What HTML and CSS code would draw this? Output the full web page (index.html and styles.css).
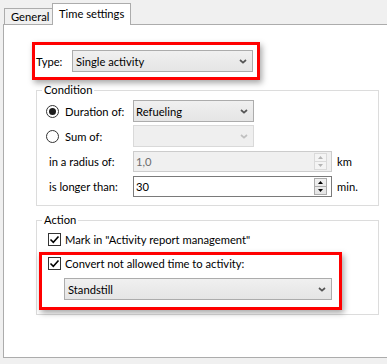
FILE: index.html
```html
<!DOCTYPE html>
<html lang="en">
<head>
  <meta charset="UTF-8">
  <title>Time settings</title>
  <link rel="stylesheet" href="styles.css">
</head>
<body>
  <div class="tabs">
    <div class="tab">General</div>
    <div class="tab active">Time settings</div>
  </div>

  <div class="panel">
    <div class="highlight type-box">
      <span class="type-label">Type:</span>
      <div class="combo type-combo">
        <span>Single activity</span>
        <svg class="chev" width="8" height="5" viewBox="0 0 8 5"><path d="M1 1l3 2.6L7 1"/></svg>
      </div>
    </div>

    <fieldset class="group condition">
      <legend>Condition</legend>
      <div class="cond-grid">
        <label class="opt"><span class="radio checked"></span>Duration of:</label>
        <div class="combo short">
          <span>Refueling</span>
          <svg class="chev" width="8" height="5" viewBox="0 0 8 5"><path d="M1 1l3 2.6L7 1"/></svg>
        </div>
        <span></span>

        <label class="opt"><span class="radio"></span>Sum of:</label>
        <div class="combo short disabled">
          <span></span>
          <svg class="chev" width="8" height="5" viewBox="0 0 8 5"><path d="M1 1l3 2.6L7 1"/></svg>
        </div>
        <span></span>

        <span class="plain">in a radius of:</span>
        <div class="spin disabled">
          <span class="spin-value">1,0</span>
          <div class="spin-buttons">
            <svg width="5" height="3" viewBox="0 0 5 3"><path d="M0 3h5L2.5 0z"/></svg>
            <svg width="5" height="3" viewBox="0 0 5 3"><path d="M0 0h5L2.5 3z"/></svg>
          </div>
        </div>
        <span class="unit">km</span>

        <span class="plain">is longer than:</span>
        <div class="spin">
          <span class="spin-value">30</span>
          <div class="spin-buttons">
            <svg width="5" height="3" viewBox="0 0 5 3"><path d="M0 3h5L2.5 0z"/></svg>
            <svg width="5" height="3" viewBox="0 0 5 3"><path d="M0 0h5L2.5 3z"/></svg>
          </div>
        </div>
        <span class="unit">min.</span>
      </div>
    </fieldset>

    <fieldset class="group action">
      <legend>Action</legend>
      <label class="check-row mark-row">
        <span class="check"><svg width="11" height="11" viewBox="0 0 11 11"><path d="M1.5 5.5l2.8 2.8L9.5 2.5"/></svg></span>
        Mark in "Activity report management"
      </label>
      <div class="highlight convert-box">
        <label class="check-row">
          <span class="check"><svg width="11" height="11" viewBox="0 0 11 11"><path d="M1.5 5.5l2.8 2.8L9.5 2.5"/></svg></span>
          Convert not allowed time to activity:
        </label>
        <div class="combo convert-combo">
          <span>Standstill</span>
          <svg class="chev" width="8" height="5" viewBox="0 0 8 5"><path d="M1 1l3 2.6L7 1"/></svg>
        </div>
      </div>
    </fieldset>
  </div>
</body>
</html>
```

FILE: styles.css
```css
body {
  margin: 0;
  width: 387px;
  height: 364px;
  overflow: hidden;
  background-color: #f0f0f0;
  font-family: "Segoe UI", Lato, "Open Sans", sans-serif;
  font-size: 11.2px;
  color: #000;
}

/* tabs */
.tabs {
  display: flex;
  align-items: flex-end;
  height: 25px;
  padding-left: 4px;
  margin-bottom: -1px;
  position: relative;
  z-index: 1;
  white-space: nowrap;
}

.tab {
  box-sizing: border-box;
  height: 17px;
  padding: 0 0 0 6px;
  width: 49px;
  line-height: 15px;
  border: 1px solid #acacac;
  background-color: #f0f0f0;
}

.tab.active {
  height: 22px;
  width: 79px;
  margin-left: -1px;
  padding-left: 6px;
  line-height: 19px;
  border-bottom: none;
  background-color: #fff;
}

/* panel */
.panel {
  box-sizing: border-box;
  width: 385px;
  height: 334px;
  margin-left: 3px;
  padding: 17px 0 0 28px;
  border: 1px solid #acacac;
  background-color: #fff;
}

.highlight {
  box-sizing: border-box;
  border: 3px solid #f00;
  box-shadow: 2px 3px 6px rgba(0, 0, 0, 0.35);
}

.type-box {
  display: flex;
  align-items: center;
  width: 228px;
  height: 38px;
  padding-left: 1px;
}

.type-label {
  width: 36px;
}

/* combo boxes */
.combo {
  box-sizing: border-box;
  display: flex;
  align-items: center;
  justify-content: space-between;
  height: 22px;
  padding: 0 5px 0 3px;
  border: 1px solid #acacac;
  background: linear-gradient(#f0f0f0, #e5e5e5);
}

.chev {
  fill: none;
  stroke: #555;
  stroke-width: 1.7;
}

.combo.disabled {
  border-color: #d9d9d9;
  background: #efefef;
}

.combo.disabled .chev {
  stroke: #bfbfbf;
}

.type-combo {
  width: 181px;
}

.combo.short {
  width: 121px;
  padding-left: 2px;
}

/* groups */
.group {
  box-sizing: border-box;
  width: 343px;
  margin: 0 0 0 4px;
  padding: 0;
  border: 1px solid #dcdcdc;
  min-width: 0;
}

.group legend {
  margin-left: 5px;
  padding: 0 2px;
  line-height: 16px;
}

.condition {
  margin-top: 2px;
  padding-bottom: 8px;
}

.cond-grid {
  display: grid;
  grid-template-columns: 87px 199px auto;
  grid-auto-rows: 22px;
  row-gap: 3px;
  align-items: center;
  padding: 2px 0 0 9px;
}

.opt {
  display: flex;
  align-items: center;
  gap: 6px;
}

.radio {
  box-sizing: border-box;
  display: flex;
  align-items: center;
  justify-content: center;
  width: 13px;
  height: 13px;
  border: 1px solid #333;
  border-radius: 50%;
  background-color: #fff;
}

.radio.checked::after {
  content: "";
  width: 7px;
  height: 7px;
  border-radius: 50%;
  background-color: #1b1b1b;
}

.plain {
  padding-left: 3px;
}

.unit {
  padding-left: 5px;
}

/* spin inputs */
.spin {
  box-sizing: border-box;
  display: flex;
  align-items: stretch;
  justify-content: space-between;
  height: 21px;
  padding: 1px 4px 1px 2px;
  border: 1px solid #7a7a7a;
  background-color: #fff;
}

.spin-value {
  align-self: center;
}

.spin-buttons {
  display: flex;
  flex-direction: column;
  width: 11px;
  border: 1px solid #acacac;
  background: linear-gradient(#f0f0f0, #e5e5e5);
}

.spin-buttons svg {
  flex: 1;
  width: 5px;
  margin: 0 auto;
  fill: #000;
}

.spin-buttons svg + svg {
  border-top: 1px solid #acacac;
  width: 100%;
  padding: 0 3px;
  box-sizing: border-box;
}

.spin.disabled {
  border-color: #cccccc;
  background-color: #f0f0f0;
  color: #6d6d6d;
}

.spin.disabled .spin-buttons {
  border-color: #dadada;
  background: #f4f4f4;
}

.spin.disabled .spin-buttons svg {
  fill: #b5b5b5;
}

.spin.disabled .spin-buttons svg + svg {
  border-top-color: #dadada;
}

/* action group */
.action {
  margin-top: 6px;
  padding-bottom: 4px;
}

.check-row {
  display: flex;
  align-items: center;
  gap: 4px;
  height: 16px;
}

.mark-row {
  margin: 3px 0 0 11px;
}

.check {
  box-sizing: border-box;
  display: flex;
  align-items: center;
  justify-content: center;
  width: 13px;
  height: 13px;
  border: 1px solid #333;
  background-color: #fff;
}

.check svg {
  fill: none;
  stroke: #000;
  stroke-width: 1.6;
}

.convert-box {
  width: 303px;
  height: 58px;
  margin: 5px 0 0 2px;
  padding: 0 7px 0 6px;
}

.convert-combo {
  width: 268px;
  margin: 7px 0 0 16px;
}
```
